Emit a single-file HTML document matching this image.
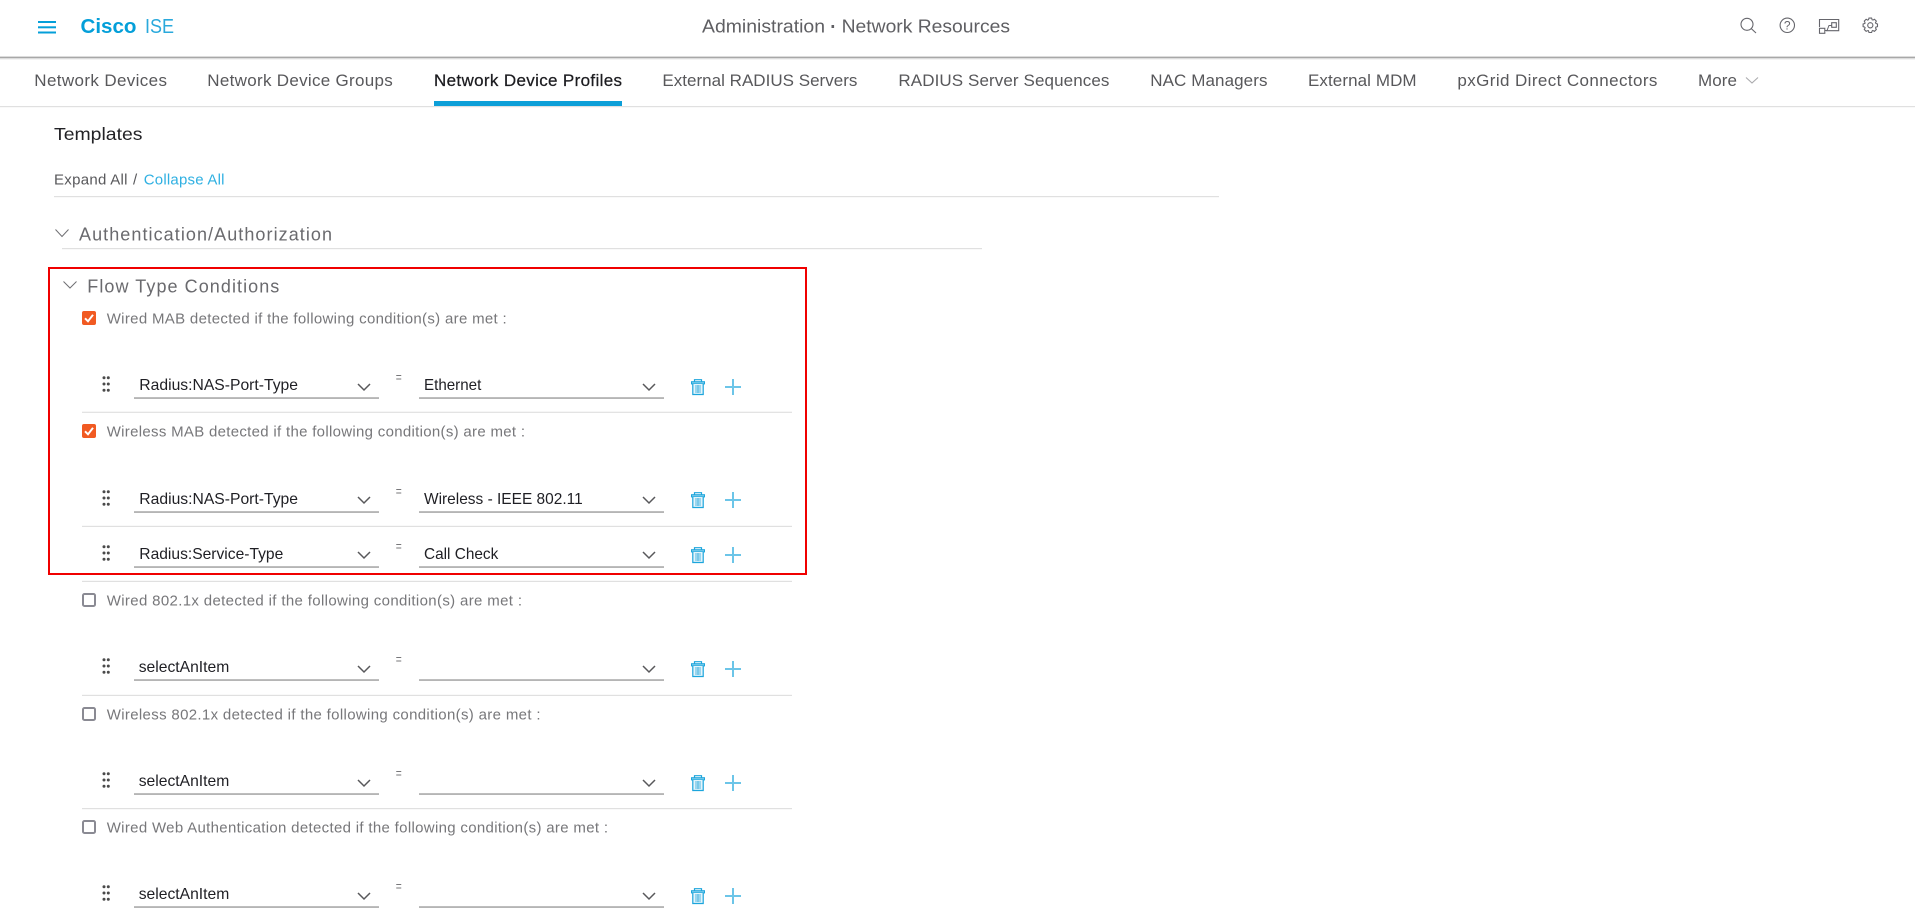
<!DOCTYPE html>
<html lang="en">
<head>
<meta charset="utf-8">
<title>Cisco ISE - Network Device Profiles</title>
<style>
html,body{margin:0;padding:0;background:#fff;width:1915px;height:915px;overflow:hidden}
svg{display:block}
text{font-family:"Liberation Sans",Arial,sans-serif;white-space:pre}
.tab{font-size:17px;fill:#58585b}
.lbl{font-size:15px;fill:#77777a}
.sel{font-size:16px;fill:#1f1f24}
.eq{font-size:14px;fill:#77777a}
.head{font-size:18px;fill:#6a6a6e}
</style>
</head>
<body>
<svg xmlns="http://www.w3.org/2000/svg" width="1915" height="915" viewBox="0 0 1915 915">
<defs>
  <g id="chev"><path d="M0 0L6 6L12 0" fill="none" stroke="#58585b" stroke-width="1.5"/></g>
  <g id="tooth"><path d="M-1.9 -5.4L-1.3 -7.2L1.3 -7.2L1.9 -5.4L2.47 -5.16" fill="none" stroke="#66666c" stroke-width="1.1"/></g>
  <g id="trash">
    <path d="M694.5 382V379.7H701.5V382" fill="none" stroke="#1ca5dc" stroke-width="1.2"/>
    <rect x="691.5" y="381.7" width="13" height="2.2" fill="#7fcdeb" stroke="#1ca5dc" stroke-width="1"/>
    <path d="M692.8 384V394.5H703.2V384" fill="#e4f4fb" stroke="#1ca5dc" stroke-width="1.2"/>
    <rect x="695" y="385" width="6" height="8" fill="#9bd6ee"/>
    <rect x="697.4" y="385" width="1.2" height="8" fill="#63bfe4"/>
  </g>
  <g id="rowa">
    <g fill="#4a4a4a">
      <circle cx="104" cy="377.7" r="1.5"/><circle cx="108.3" cy="377.7" r="1.5"/>
      <circle cx="104" cy="384" r="1.5"/><circle cx="108.3" cy="384" r="1.5"/>
      <circle cx="104" cy="390.3" r="1.5"/><circle cx="108.3" cy="390.3" r="1.5"/>
    </g>
    <rect x="134" y="397.3" width="245" height="1.5" fill="#a3a3a3"/>
    <rect x="419" y="397.3" width="245" height="1.5" fill="#a3a3a3"/>
    <text class="eq" x="395.7" y="382" textLength="6" lengthAdjust="spacingAndGlyphs">=</text>
  </g>
  <g id="rowb">
    <use href="#chev" x="358" y="384"/>
    <use href="#chev" x="643" y="384"/>
    <use href="#trash"/>
    <rect x="725" y="386" width="16" height="2" fill="#6cc5e8"/>
    <rect x="732" y="379" width="2" height="16" fill="#6cc5e8"/>
  </g>
  <g id="chk">
    <rect x="82" y="0" width="14" height="14" rx="2" fill="#f15a22"/>
    <path d="M85 7.3L88 10.3L93 3.8" fill="none" stroke="#fff" stroke-width="2"/>
  </g>
  <g id="unchk">
    <rect x="83" y="1" width="12" height="12" rx="1.5" fill="#fff" stroke="#8a8a93" stroke-width="2"/>
  </g>
</defs>

<!-- header -->
<rect x="38" y="21" width="18" height="2" fill="#049fd9"/>
<rect x="38" y="26.3" width="18" height="2" fill="#049fd9"/>
<rect x="38" y="31.5" width="18" height="2" fill="#049fd9"/>
<text x="80.5" y="33" font-size="20" font-weight="bold" fill="#049fd9" textLength="56" lengthAdjust="spacingAndGlyphs">Cisco</text>
<text x="145" y="33" font-size="20" fill="#2aa9dc" textLength="29" lengthAdjust="spacingAndGlyphs">ISE</text>
<text x="702" y="32.5" font-size="18" fill="#5f5f63" textLength="123" lengthAdjust="spacingAndGlyphs">Administration</text>
<rect x="831.5" y="25" width="2.6" height="3" fill="#5f5f63"/>
<text x="841.6" y="32.5" font-size="18" fill="#5f5f63" textLength="168.4" lengthAdjust="spacingAndGlyphs">Network Resources</text>

<!-- header icons -->
<circle cx="1747" cy="24.3" r="6" fill="none" stroke="#66666c" stroke-width="1.1"/>
<path d="M1751.3 28.6L1756 33" fill="none" stroke="#66666c" stroke-width="1.1"/>
<circle cx="1787.3" cy="25.3" r="7.2" fill="none" stroke="#66666c" stroke-width="1.1"/>
<text x="1783.9" y="29.7" font-size="12" fill="#66666c">?</text>
<path d="M1819.5 27V19.5H1838.7V30.7H1826" fill="none" stroke="#66666c" stroke-width="1.1"/>
<rect x="1819.5" y="28.3" width="5.3" height="5" fill="none" stroke="#66666c" stroke-width="1.1"/>
<rect x="1831.7" y="22.7" width="4.6" height="4.6" fill="none" stroke="#66666c" stroke-width="1.1"/>
<path d="M1825 30.5H1827L1829 25.5H1831.5" fill="none" stroke="#66666c" stroke-width="1"/>
<g transform="translate(1870.3 25.3)">
  <use href="#tooth"/>
  <use href="#tooth" transform="rotate(45)"/>
  <use href="#tooth" transform="rotate(90)"/>
  <use href="#tooth" transform="rotate(135)"/>
  <use href="#tooth" transform="rotate(180)"/>
  <use href="#tooth" transform="rotate(225)"/>
  <use href="#tooth" transform="rotate(270)"/>
  <use href="#tooth" transform="rotate(315)"/>
  <circle r="2.6" fill="none" stroke="#66666c" stroke-width="1.1"/>
</g>

<rect x="0" y="56.6" width="1915" height="1.4" fill="#a8a8a8"/>
<rect x="0" y="58" width="1915" height="1" fill="#dcdcdc"/>
<rect x="0" y="59" width="1915" height="1" fill="#f3f3f3"/>

<!-- tabs -->
<text class="tab" x="34.3" y="86" textLength="132.7">Network Devices</text>
<text class="tab" x="207.3" y="86" textLength="185.5">Network Device Groups</text>
<text class="tab" x="434" y="86" textLength="188" style="fill:#1c1c20;stroke:#1c1c20;stroke-width:.25px">Network Device Profiles</text>
<text class="tab" x="662.4" y="86" textLength="195">External RADIUS Servers</text>
<text class="tab" x="898.4" y="86" textLength="211">RADIUS Server Sequences</text>
<text class="tab" x="1150.2" y="86" textLength="117.3">NAC Managers</text>
<text class="tab" x="1308" y="86" textLength="108.6">External MDM</text>
<text class="tab" x="1457.4" y="86" textLength="200">pxGrid Direct Connectors</text>
<text class="tab" x="1698" y="86" textLength="39">More</text>
<path d="M1746 77.5L1752 83L1758 77.5" fill="none" stroke="#aaaaad" stroke-width="1.1"/>
<rect x="0" y="106" width="1915" height="1.2" fill="#e0e0e0"/>
<rect x="434" y="101" width="188" height="5" fill="#0d9fd8"/>

<!-- templates -->
<text x="54" y="140" font-size="17.5" fill="#222226" textLength="88.5" lengthAdjust="spacingAndGlyphs">Templates</text>
<text x="54" y="184.3" font-size="15" fill="#58585b" textLength="73.5">Expand All</text>
<text x="133" y="184.3" font-size="15" fill="#58585b">/</text>
<text x="143.7" y="184.3" font-size="15" fill="#2fb0e2" textLength="80.8">Collapse All</text>
<rect x="54" y="196" width="1165" height="1.2" fill="#e0e0e0"/>

<path d="M55.5 229.5L62 236.5L68.5 229.5" fill="none" stroke="#6f6f73" stroke-width="1"/>
<text class="head" x="79" y="240.3" textLength="253">Authentication/Authorization</text>
<rect x="62" y="248" width="920" height="1.2" fill="#e0e0e0"/>

<path d="M63.5 281.5L70 288L76.5 281.5" fill="none" stroke="#6f6f73" stroke-width="1"/>
<text class="head" x="87.3" y="292.3" textLength="192">Flow Type Conditions</text>

<!-- separators -->
<g fill="#e0e0e0">
  <rect x="82" y="411.7" width="710" height="1.2"/>
  <rect x="82" y="525.8" width="710" height="1.2"/>
  <rect x="82" y="580.8" width="710" height="1.2"/>
  <rect x="82" y="694.8" width="710" height="1.2"/>
  <rect x="82" y="808" width="710" height="1.2"/>
</g>

<!-- Wired MAB -->
<use href="#chk" y="311"/>
<text class="lbl" x="106.7" y="323.3" textLength="400">Wired MAB detected if the following condition(s) are met :</text>
<use href="#rowa"/><use href="#rowb"/>
<text class="sel" x="139.3" y="390" textLength="158.7" lengthAdjust="spacingAndGlyphs">Radius:NAS-Port-Type</text>
<text class="sel" x="424" y="390" textLength="57.3" lengthAdjust="spacingAndGlyphs">Ethernet</text>

<!-- Wireless MAB -->
<use href="#chk" y="424"/>
<text class="lbl" x="106.7" y="436.3" textLength="418.3">Wireless MAB detected if the following condition(s) are met :</text>
<g transform="translate(0 114)">
  <use href="#rowa"/>
  <text class="sel" x="139.3" y="390" textLength="158.7" lengthAdjust="spacingAndGlyphs">Radius:NAS-Port-Type</text>
  <text class="sel" x="424" y="390" textLength="158.7" lengthAdjust="spacingAndGlyphs">Wireless - IEEE 802.11</text>
</g>
<use href="#rowb" y="113"/>
<g transform="translate(0 169)">
  <use href="#rowa"/>
  <text class="sel" x="139.3" y="390" textLength="144" lengthAdjust="spacingAndGlyphs">Radius:Service-Type</text>
  <text class="sel" x="424" y="390" textLength="74.3" lengthAdjust="spacingAndGlyphs">Call Check</text>
</g>
<use href="#rowb" y="168"/>

<!-- Wired 802.1x -->
<use href="#unchk" y="593"/>
<text class="lbl" x="106.7" y="605.3" textLength="415.3">Wired 802.1x detected if the following condition(s) are met :</text>
<g transform="translate(0 282)">
  <use href="#rowa"/><use href="#rowb"/>
  <text class="sel" x="138.7" y="390" textLength="90.6" lengthAdjust="spacingAndGlyphs">selectAnItem</text>
</g>

<!-- Wireless 802.1x -->
<use href="#unchk" y="707"/>
<text class="lbl" x="106.7" y="719.3" textLength="433.8">Wireless 802.1x detected if the following condition(s) are met :</text>
<g transform="translate(0 396)">
  <use href="#rowa"/><use href="#rowb"/>
  <text class="sel" x="138.7" y="390" textLength="90.6" lengthAdjust="spacingAndGlyphs">selectAnItem</text>
</g>

<!-- Wired Web Auth -->
<use href="#unchk" y="820"/>
<text class="lbl" x="106.7" y="832.3" textLength="501.3">Wired Web Authentication detected if the following condition(s) are met :</text>
<g transform="translate(0 509)">
  <use href="#rowa"/><use href="#rowb"/>
  <text class="sel" x="138.7" y="390" textLength="90.6" lengthAdjust="spacingAndGlyphs">selectAnItem</text>
</g>

<!-- red highlight -->
<rect x="49" y="268" width="757" height="306" fill="none" stroke="#f00000" stroke-width="2"/>
</svg>
</body>
</html>
